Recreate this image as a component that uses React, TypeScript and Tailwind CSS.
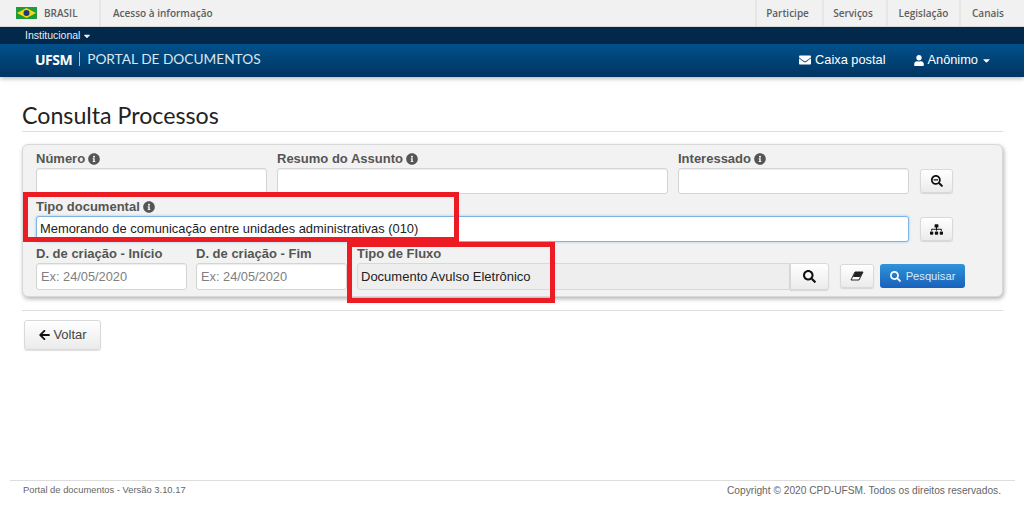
import { FaInfoCircle, FaSearch, FaSearchMinus, FaSitemap, FaArrowLeft, FaEnvelope, FaUser, FaCaretDown } from 'react-icons/fa';

const sans = "font-['Liberation_Sans',Arial,sans-serif]";

const Label = ({ text, info }: { text: string; info?: boolean }) => (
  <div className="h-[19px] flex items-center gap-[3px] text-[13px] font-bold text-[#555]">
    {text}
    {info && <FaInfoCircle className="w-[12px] h-[12px] text-[#555]" />}
  </div>
);

const inputClass =
  'h-[26px] w-full rounded-[3px] border border-[#d4d4d4] bg-white shadow-[inset_0_1px_1px_rgba(0,0,0,0.07)]';

const Flag = () => (
  <svg width="21" height="12" viewBox="0 0 21 12">
    <rect width="21" height="12" fill="#1f9a3c" />
    <polygon points="10.5,1 20,6 10.5,11 1,6" fill="#f5d90a" />
    <circle cx="10.5" cy="6" r="3" fill="#1c3a80" />
  </svg>
);

const Eraser = () => (
  <svg width="14" height="10" viewBox="0 0 14 10">
    <polygon points="5,1 13,1 9,9 1,9" fill="#fff" stroke="#222" strokeWidth="1" />
    <polygon points="5,1 13,1 10,6 3,6" fill="#222" />
  </svg>
);

const btn =
  'flex items-center justify-center rounded-[3px] border border-[#d9d9d9] bg-gradient-to-b from-white to-[#ebebeb] shadow-[0_1px_1px_rgba(0,0,0,0.12)] text-[#111]';

const topCell = 'h-full flex items-center justify-center border-l-2 border-[#e6e6e6]';

export default function App() {
  return (
    <div className={`relative h-[506px] w-[1024px] overflow-hidden bg-white ${sans}`}>
      {/* barra do governo */}
      <div className="h-[27px] flex items-center justify-between bg-[#f1f1f1] border-b border-[#d8d8d8] font-['Open_Sans',sans-serif] text-[10px] font-semibold text-[#606060]">
        <div className="h-full flex items-center">
          <div className="h-full w-[101px] flex items-center gap-[7px] pl-[16px] border-r-2 border-[#e6e6e6]">
            <Flag />
            <span>BRASIL</span>
          </div>
          <span className="ml-[12px]">Acesso à informação</span>
        </div>
        <div className="h-full flex items-center pr-[9px]">
          <div className={`${topCell} w-[67px] pr-[4px]`}>Participe</div>
          <div className={`${topCell} w-[64px] pr-[4px]`}>Serviços</div>
          <div className={`${topCell} w-[73px]`}>Legislação</div>
          <div className={`${topCell} w-[56px]`}>Canais</div>
        </div>
      </div>

      <div className="h-[17px] bg-[#02284a] flex items-center pl-[25px] text-[10.5px] text-[#e8eef3]">
        Institucional
        <FaCaretDown className="w-[10px] h-[10px] ml-[2px]" />
      </div>

      <div className="h-[33px] bg-gradient-to-b from-[#01518c] to-[#023460] shadow-[0_2px_4px_rgba(0,0,0,0.25)] flex items-center text-white">
        <span className="ml-[35px] mb-[3px] text-[14px] font-bold font-['Open_Sans',sans-serif] tracking-[-0.5px]">UFSM</span>
        <span className="mx-[7px] mb-[3px] w-px h-[14px] bg-[#a9c2d6]" />
        <span className="mb-[3px] font-['Lato',sans-serif] text-[13.7px] text-[#dbe6ee]">PORTAL DE DOCUMENTOS</span>
        <div className="ml-auto mb-[1px] flex items-center text-[12.8px] mr-[32px]">
          <FaEnvelope className="w-[14px] h-[12px] mr-[3px]" />
          <span>Caixa postal</span>
          <FaUser className="w-[10px] h-[11px] ml-[29px] mr-[3px]" />
          <span>Anônimo</span>
          <FaCaretDown className="w-[11px] h-[11px] ml-[3px]" />
        </div>
      </div>

      <div className="pl-[22px] pr-[21px]">
        <h1 className="mt-[24px] h-[30px] font-['Lato',sans-serif] text-[23.2px] leading-[28px] text-[#222]">
          Consulta Processos
        </h1>
        <div className="border-t border-[#ddd]" />

        <div className="mt-[12px] h-[153px] rounded-[6px] border border-[#d8d8d8] bg-[#f2f2f2] shadow-[1px_2px_4px_rgba(0,0,0,0.3)] pl-[13px] pt-[4px]">
          <div className="flex items-end">
            <div className="w-[231px]">
              <Label text="Número" info />
              <div className={inputClass} />
            </div>
            <div className="w-[391px] ml-[10px]">
              <Label text="Resumo do Assunto" info />
              <div className={inputClass} />
            </div>
            <div className="w-[231px] ml-[10px]">
              <Label text="Interessado" info />
              <div className={inputClass} />
            </div>
            <button className={`${btn} w-[33px] h-[24px] ml-[11px] mb-px`}>
              <FaSearchMinus className="w-[12px] h-[12px]" />
            </button>
          </div>

          <div className="flex items-end mt-[3px]">
            <div className="w-[873px]">
              <Label text="Tipo documental" info />
              <div className="h-[26px] w-full rounded-[3px] border border-[#7db4e0] bg-white shadow-[0_0_3px_rgba(102,175,233,0.6)] flex items-center pl-[3px] text-[12.9px] text-[#222]">
                Memorando de comunicação entre unidades administrativas (010)
              </div>
            </div>
            <button className={`${btn} w-[33px] h-[24px] ml-[11px] mb-px`}>
              <FaSitemap className="w-[13px] h-[11px]" />
            </button>
          </div>

          <div className="flex items-end mt-[2px]">
            <div className="w-[151px]">
              <Label text="D. de criação - Início" />
              <div className={`${inputClass} h-[27px] flex items-center pl-[4px] text-[12.8px] text-[#808080]`}>Ex: 24/05/2020</div>
            </div>
            <div className="w-[151px] ml-[9px]">
              <Label text="D. de criação - Fim" />
              <div className={`${inputClass} h-[27px] flex items-center pl-[4px] text-[12.8px] text-[#808080]`}>Ex: 24/05/2020</div>
            </div>
            <div className="w-[472px] ml-[10px]">
              <Label text="Tipo de Fluxo" />
              <div className="flex">
                <div className="h-[27px] w-[433px] rounded-l-[3px] border border-[#d8d8d8] bg-[#eeeeee] flex items-center pl-[3px] text-[13px] text-[#222]">
                  Documento Avulso Eletrônico
                </div>
                <button className={`${btn} w-[39px] h-[27px] rounded-l-none`}>
                  <FaSearch className="w-[13px] h-[13px]" />
                </button>
              </div>
            </div>
            <button className={`${btn} w-[34px] h-[24px] ml-[11px] mb-[2px]`}>
              <Eraser />
            </button>
            <button className="ml-[6px] mb-[2px] w-[85px] h-[24px] flex items-center justify-center gap-[5px] rounded-[3px] bg-gradient-to-b from-[#2f95d8] to-[#1a60bb] text-[11.2px] text-[#d8ecfa]">
              <FaSearch className="w-[11px] h-[11px] text-white" />
              Pesquisar
            </button>
          </div>
        </div>

        <div className="border-t border-[#ddd] mt-[13px]" />

        <button className={`${btn} ml-[2px] mt-[9px] w-[77px] h-[30px] gap-[2px] text-[13px] text-[#444]`}>
          <FaArrowLeft className="w-[13px] h-[12px] text-[#111]" />
          Voltar
        </button>
      </div>

      {/* rodape */}
      <div className="absolute left-[10px] right-[9px] top-[480px] border-t border-[#ddd] flex justify-between pl-[13px] pr-[14px] pt-[2px] text-[#666]">
        <span className="text-[9.4px]">Portal de documentos - Versão 3.10.17</span>
        <span className="text-[10.2px]">Copyright © 2020 CPD-UFSM. Todos os direitos reservados.</span>
      </div>

      {/* marcacoes vermelhas */}
      <div className="absolute left-[23px] top-[192px] w-[436px] h-[50px] border-[5px] border-[#ed1c24]" />
      <div className="absolute left-[347px] top-[242px] w-[208px] h-[61px] border-[5px] border-[#ed1c24]" />
    </div>
  );
}
